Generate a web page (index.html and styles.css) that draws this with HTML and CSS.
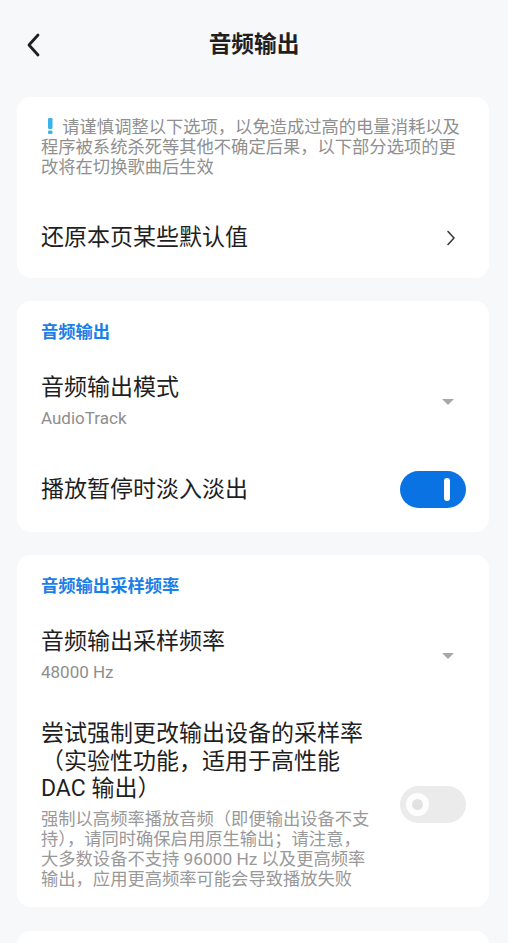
FILE: index.html
```html
<!DOCTYPE html>
<html>
<head>
    <meta charset="utf-8">
    <title>音频输出</title>
    <link rel="stylesheet" href="styles.css">
</head>
<body>
    <div class="toolbar">
        <div class="back">
            <svg width="16" height="24" viewBox="0 0 16 24"><path d="M12 2 L3 12 L12 22" fill="none" stroke="#1f1f1f" stroke-width="2.8" stroke-linecap="round" stroke-linejoin="round"/></svg>
        </div>
        <h1 class="title">音频输出</h1>
        <div></div>
    </div>

    <div class="card card-notice">
        <p class="notice"><svg class="bang" width="17" height="18" viewBox="0 0 17 18"><rect x="7" y="1" width="4.5" height="11" rx="1.2" fill="#3ab2ea"/><rect x="7" y="13.5" width="4.5" height="3.5" rx="1.2" fill="#3ab2ea"/></svg> 请谨慎调整以下选项，以免造成过高的电量消耗以及程序被系统杀死等其他不确定后果，以下部分选项的更改将在切换歌曲后生效</p>
        <div class="pref pref-reset">
            <div class="pref-text">
                <div class="pref-title">还原本页某些默认值</div>
            </div>
            <svg class="chevron" width="10" height="16" viewBox="0 0 10 16"><path d="M2 1.5 L8 8 L2 14.5" fill="none" stroke="#3a3a3a" stroke-width="1.6" stroke-linecap="round" stroke-linejoin="round"/></svg>
        </div>
    </div>

    <div class="card card-output">
        <div class="section-title">音频输出</div>
        <div class="pref pref-list">
            <div class="pref-text">
                <div class="pref-title">音频输出模式</div>
                <div class="pref-summary">AudioTrack</div>
            </div>
            <span class="dropdown"></span>
        </div>
        <div class="pref pref-switch">
            <div class="pref-text">
                <div class="pref-title">播放暂停时淡入淡出</div>
            </div>
            <span class="switch on"><span class="thumb"></span></span>
        </div>
    </div>

    <div class="card card-rate">
        <div class="section-title">音频输出采样频率</div>
        <div class="pref pref-list">
            <div class="pref-text">
                <div class="pref-title">音频输出采样频率</div>
                <div class="pref-summary">48000 Hz</div>
            </div>
            <span class="dropdown"></span>
        </div>
        <div class="pref pref-switch">
            <div class="pref-text">
                <div class="pref-title multi">尝试强制更改输出设备的采样率（实验性功能，适用于高性能 DAC 输出）</div>
                <div class="pref-desc">强制以高频率播放音频（即便输出设备不支持），请同时确保启用原生输出；请注意，大多数设备不支持 96000 Hz 以及更高频率输出，应用更高频率可能会导致播放失败</div>
            </div>
            <span class="switch off"><span class="thumb"></span></span>
        </div>
    </div>

    <div class="card card-next"></div>
</body>
</html>
```

FILE: styles.css
```css
body {
    margin: 0;
    padding: 0;
    background-color: #f7f8fa;
    font-family: Roboto, "Noto Sans CJK SC", sans-serif;
    color: #1f1f1f;
    overflow: hidden;
}
.toolbar {
    display: grid;
    grid-template-columns: 68px 1fr 68px;
    align-items: center;
    height: 90px;
}
.back {
    display: flex;
    align-items: center;
    padding-left: 26px;
    height: 24px;
}
.title {
    margin: 0;
    text-align: center;
    font-size: 22.7px;
    font-weight: bold;
    line-height: 30px;
}
.card {
    background-color: #fff;
    border-radius: 14px;
    margin: 7px 19px 23px 17px;
    padding: 21px 23px 0 24px;
}
.card-notice {
    padding-top: 20px;
    padding-bottom: 25px;
}
.notice {
    margin: 0;
    font-size: 17.3px;
    line-height: 20px;
    color: #8f8f8f;
}
.bang {
    vertical-align: -2px;
}
.section-title {
    font-size: 17.3px;
    line-height: 20px;
    font-weight: bold;
    color: #1a7fe9;
}
.pref {
    display: flex;
    align-items: center;
}
.pref-text {
    flex: 1;
    min-width: 0;
}
.pref-title {
    font-size: 23px;
    line-height: 30px;
}
.pref-title.multi {
    line-height: 27.5px;
}
.pref-summary {
    margin-top: 3px;
    font-size: 17px;
    line-height: 24px;
    color: #8e8e8e;
}
.pref-desc {
    margin-top: 6px;
    font-size: 17.3px;
    line-height: 20px;
    color: #999;
}
.pref-reset {
    margin-top: 46px;
}
.chevron {
    margin-right: 10px;
}
.pref-list {
    margin-top: 31px;
}
.dropdown {
    width: 0;
    height: 0;
    margin-right: 12px;
    border-left: 6px solid transparent;
    border-right: 6px solid transparent;
    border-top: 6px solid #a8a8a8;
}
.card-output .pref-switch {
    margin-top: 41px;
    padding-bottom: 24px;
}
.card-rate .pref-switch {
    margin-top: 36px;
    padding-bottom: 18px;
}
.switch {
    flex: none;
    position: relative;
    width: 66px;
    height: 37px;
    margin-left: 24px;
    border-radius: 19px;
}
.switch.on {
    background-color: #0a73e4;
}
.switch.off {
    background-color: #ebebeb;
}
.switch.on .thumb {
    position: absolute;
    left: 44px;
    top: 7px;
    width: 6px;
    height: 23px;
    border-radius: 3px;
    background-color: #fff;
}
.switch.off .thumb {
    position: absolute;
    left: 6px;
    top: 7px;
    width: 11px;
    height: 11px;
    border: 6px solid #fdfdfd;
    border-radius: 50%;
    background-color: #e2e2e2;
}
.card-next {
    height: 60px;
    margin-top: 24px;
    padding: 0;
}
```
